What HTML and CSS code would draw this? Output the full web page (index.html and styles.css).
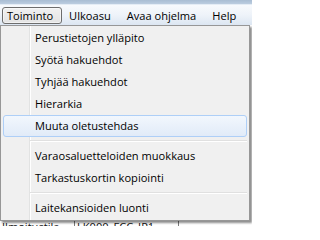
FILE: index.html
```html
<!DOCTYPE html>
<html lang="fi">
<head>
<meta charset="utf-8">
<title>Toiminto</title>
<link rel="stylesheet" href="styles.css">
</head>
<body>
<div class="window">
  <div class="titlebar"></div>
  <div class="menubar">
    <span class="mb-item open">Toiminto</span>
    <span class="mb-item">Ulkoasu</span>
    <span class="mb-item">Avaa ohjelma</span>
    <span class="mb-item">Help</span>
  </div>
  <div class="client">
    <div class="row">
      <span class="cell c1">Ilmoitustila</span>
      <span class="cell c2">LK000_FCC_IP1</span>
      <span class="cell c3"></span>
    </div>
    <div class="dropdown">
      <div class="item">Perustietojen ylläpito</div>
      <div class="item">Syötä hakuehdot</div>
      <div class="item">Tyhjää hakuehdot</div>
      <div class="item">Hierarkia</div>
      <div class="item hover">Muuta oletustehdas</div>
      <div class="sep"></div>
      <div class="item">Varaosaluetteloiden muokkaus</div>
      <div class="item">Tarkastuskortin kopiointi</div>
      <div class="sep"></div>
      <div class="item">Laitekansioiden luonti</div>
    </div>
  </div>
</div>
</body>
</html>
```
FILE: styles.css
```css
html, body {
  margin: 0;
  padding: 0;
  background: #ffffff;
}
body {
  width: 252px;
  height: 226px;
  overflow: hidden;
  font-family: "Open Sans", "Noto Sans", sans-serif;
  font-size: 11.1px;
  color: #000;
}
.window {
  width: 252px;
  height: 226px;
  overflow: hidden;
  display: flex;
  flex-direction: column;
}
.titlebar {
  flex: 0 0 4px;
  height: 4px;
  background: linear-gradient(#a9bdd3, #bccde0);
}
.menubar {
  flex: 0 0 21px;
  height: 21px;
  display: flex;
  align-items: center;
  padding-left: 2px;
  background: linear-gradient(#f8fafd 0%, #eef3f9 50%, #dce6f2 100%);
  box-sizing: border-box;
  border-top: 1px solid #e4ecf5;
}
.mb-item {
  height: 17px;
  line-height: 16px;
  padding: 0 8px 0 4px;
  margin-right: 2px;
  border: 1px solid transparent;
  border-radius: 3px;
  box-sizing: border-box;
  white-space: nowrap;
}
.mb-item.open {
  border-color: #6d6d6d;
  background: linear-gradient(#f1f1f1, #e3e3e3);
  box-shadow: inset 0 0 0 1px rgba(255,255,255,0.5);
}
.client {
  position: relative;
  flex: 1 1 auto;
  min-height: 0;
  overflow: hidden;
  padding-top: 194px;
}
.row {
  display: flex;
  height: 20px;
  line-height: 15px;
  background: #fff;
  color: #111;
}
.cell {
  border-right: 1px solid #7a7a7a;
  padding-left: 2px;
  white-space: nowrap;
  overflow: hidden;
}
.c1 { width: 72px; }
.c2 { width: 101px; }
.c3 { flex: 1; border-right: 0; }
.dropdown {
  position: absolute;
  left: 0;
  top: 0;
  width: 250px;
  box-sizing: border-box;
  padding: 1px 0 1px 0;
  border: 1px solid #979797;
  background:
    linear-gradient(to right, transparent 28px, #e2e3e3 28px, #e2e3e3 29px, #ffffff 29px, #ffffff 30px, transparent 30px),
    #f0f0f0;
  box-shadow: 2px 2px 2px rgba(0,0,0,0.45);
}
.item {
  height: 22px;
  line-height: 20px;
  margin: 0 2px;
  padding-left: 31px;
  border: 1px solid transparent;
  border-radius: 3px;
  box-sizing: border-box;
  white-space: nowrap;
}
.item.hover {
  border-color: #aecff7;
  background: linear-gradient(#f2f7fd, #e1ebf8);
}
.sep {
  height: 2px;
  margin: 3px 2px 3px 29px;
  border-top: 1px solid #e0e0e0;
  border-bottom: 1px solid #ffffff;
  box-sizing: border-box;
}
```
